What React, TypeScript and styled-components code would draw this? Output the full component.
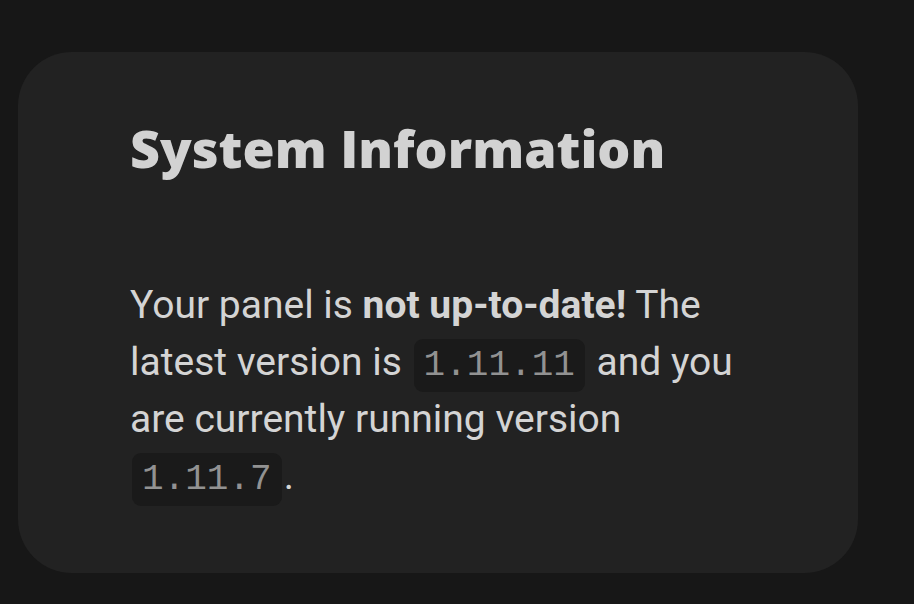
import React from 'react'
import styled, { createGlobalStyle } from 'styled-components'

const GlobalStyle = createGlobalStyle`
    html, body {
        margin: 0;
        padding: 0;
        background: #171717;
    }
`

const Page = styled.div`
    width: 914px;
    height: 604px;
    padding: 52px 56px 31px 18px;
    box-sizing: border-box;
    background: #171717;
`

const Card = styled.section`
    height: 100%;
    box-sizing: border-box;
    background: #222222;
    border-radius: 54px;
    padding: 69px 60px 0 112px;
    display: flex;
    flex-direction: column;
    gap: 103px;
`

const Title = styled.h1`
    margin: 0;
    font-family: "Open Sans", sans-serif;
    font-weight: 800;
    font-size: 52px;
    line-height: 53px;
    color: #d2d2d2;
`

const Text = styled.p`
    margin: 0;
    max-width: 625px;
    font-family: Roboto, sans-serif;
    font-size: 39px;
    line-height: 57px;
    color: #d4d4d4;

    strong {
        font-weight: 700;
    }
`

const Code = styled.code`
    font-family: "Liberation Mono", monospace;
    font-size: 36px;
    line-height: 1;
    color: #929292;
    background: #1a1a1a;
    border-radius: 9px;
    padding: 6px 10px;
    margin: 0 2px;
`

export default function App() {
    return (
        <>
            <GlobalStyle />
            <Page>
                <Card>
                    <Title>System Information</Title>
                    <Text>
                        Your panel is <strong>not up-to-date!</strong> The latest version is{' '}
                        <Code>1.11.11</Code> and you are currently running version{' '}
                        <Code>1.11.7</Code>.
                    </Text>
                </Card>
            </Page>
        </>
    )
}
